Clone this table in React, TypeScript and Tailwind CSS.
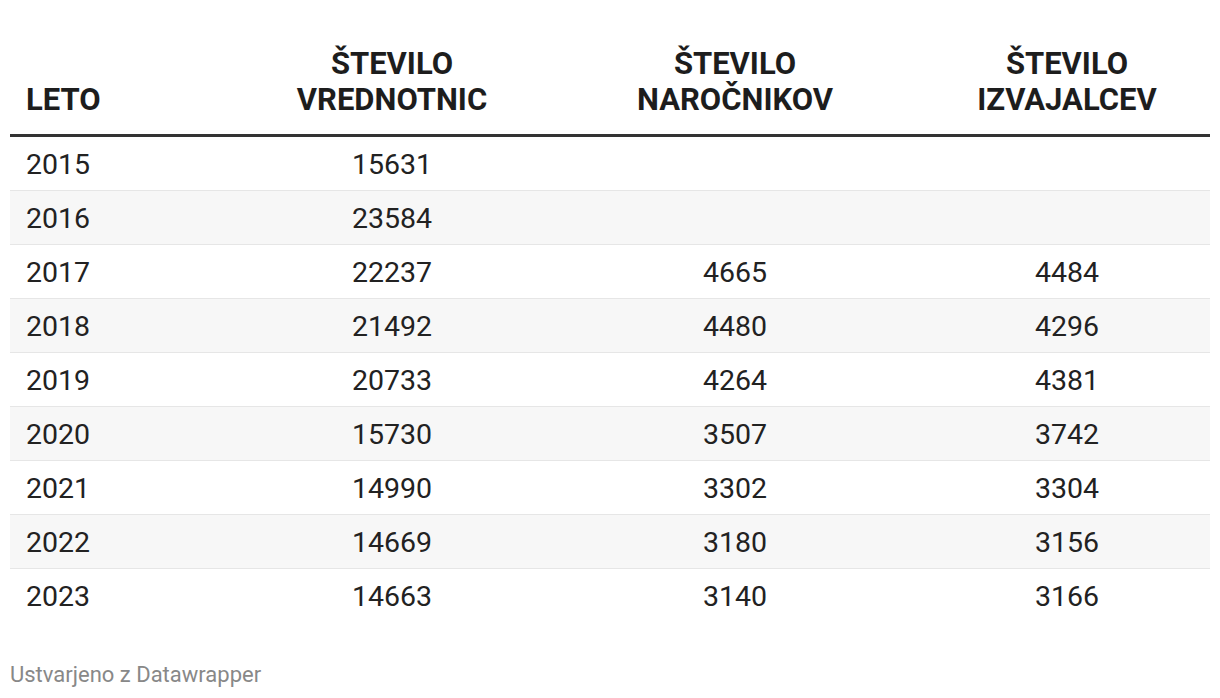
import React from "react";

const rows: [string, string, string, string][] = [
  ["2015", "15631", "", ""],
  ["2016", "23584", "", ""],
  ["2017", "22237", "4665", "4484"],
  ["2018", "21492", "4480", "4296"],
  ["2019", "20733", "4264", "4381"],
  ["2020", "15730", "3507", "3742"],
  ["2021", "14990", "3302", "3304"],
  ["2022", "14669", "3180", "3156"],
  ["2023", "14663", "3140", "3166"],
];

export default function App() {
  return (
    <div
      className="w-[1220px] h-[698px] bg-white px-[10px] pt-[46px] text-[#222]"
      style={{ fontFamily: "Roboto, 'Noto Sans', sans-serif" }}
    >
      <div className="grid grid-cols-[228px_308px_378px_286px] items-end border-b-[3px] border-[#333] pb-[16px] text-[31px] font-bold leading-[36px] text-[#1d1d1d]">
        <div className="pl-[16px]">LETO</div>
        <div className="text-center">ŠTEVILO<br />VREDNOTNIC</div>
        <div className="text-center">ŠTEVILO<br />NAROČNIKOV</div>
        <div className="text-center">ŠTEVILO<br />IZVAJALCEV</div>
      </div>
      {rows.map((r, i) => (
        <div
          key={r[0]}
          className={`grid grid-cols-[228px_308px_378px_286px] items-center h-[54px] pt-[3px] text-[28.5px] ${
            i < rows.length - 1 ? "border-b border-[#e6e6e6]" : ""
          } ${i % 2 === 1 ? "bg-[#f7f7f7]" : "bg-white"}`}
        >
          <div className="pl-[16px]">{r[0]}</div>
          <div className="text-center">{r[1]}</div>
          <div className="text-center">{r[2]}</div>
          <div className="text-center">{r[3]}</div>
        </div>
      ))}
      <div className="mt-[39px] text-[22px] leading-[26px] text-[#888]">Ustvarjeno z Datawrapper</div>
    </div>
  );
}
